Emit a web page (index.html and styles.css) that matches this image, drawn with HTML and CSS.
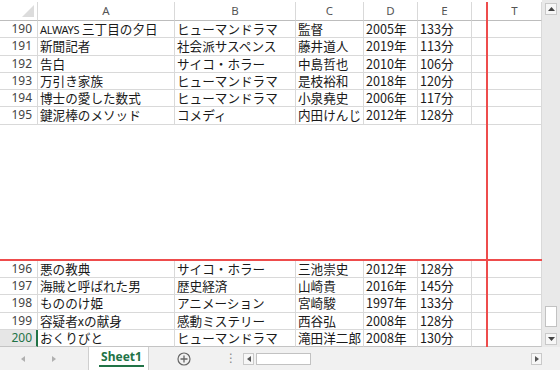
FILE: index.html
```html
<!DOCTYPE html>
<html lang="ja">
<head>
<meta charset="utf-8">
<link rel="stylesheet" href="styles.css">
</head>
<body>
<div class="app">
  <div class="main">
    <div class="sheet">
      <div class="row head">
        <div class="c rh corner"><svg class="tri" width="14" height="14" viewBox="0 0 14 14"><polygon points="13,1 13,13 1,13" fill="#dcdcdc"/></svg></div>
        <div class="c a">A</div>
        <div class="c b">B</div>
        <div class="c cc">C</div>
        <div class="c d">D</div>
        <div class="c e">E</div>
        <div class="c f"></div>
        <div class="vsplit"></div>
        <div class="c t">T</div>
      </div>
      <div class="row"><div class="c rh">190</div><div class="c a"><span class="lat">ALWAYS</span> 三丁目の夕日</div><div class="c b">ヒューマンドラマ</div><div class="c cc">監督</div><div class="c d">2005年</div><div class="c e">133分</div><div class="c f"></div><div class="vsplit"></div><div class="c t"></div></div>
      <div class="row"><div class="c rh">191</div><div class="c a">新聞記者</div><div class="c b">社会派サスペンス</div><div class="c cc">藤井道人</div><div class="c d">2019年</div><div class="c e">113分</div><div class="c f"></div><div class="vsplit"></div><div class="c t"></div></div>
      <div class="row"><div class="c rh">192</div><div class="c a">告白</div><div class="c b">サイコ・ホラー</div><div class="c cc">中島哲也</div><div class="c d">2010年</div><div class="c e">106分</div><div class="c f"></div><div class="vsplit"></div><div class="c t"></div></div>
      <div class="row"><div class="c rh">193</div><div class="c a">万引き家族</div><div class="c b">ヒューマンドラマ</div><div class="c cc">是枝裕和</div><div class="c d">2018年</div><div class="c e">120分</div><div class="c f"></div><div class="vsplit"></div><div class="c t"></div></div>
      <div class="row"><div class="c rh">194</div><div class="c a">博士の愛した数式</div><div class="c b">ヒューマンドラマ</div><div class="c cc">小泉堯史</div><div class="c d">2006年</div><div class="c e">117分</div><div class="c f"></div><div class="vsplit"></div><div class="c t"></div></div>
      <div class="row"><div class="c rh">195</div><div class="c a">鍵泥棒のメソッド</div><div class="c b">コメディ</div><div class="c cc">内田けんじ</div><div class="c d">2012年</div><div class="c e">128分</div><div class="c f"></div><div class="vsplit"></div><div class="c t"></div></div>
      <div class="gap"><div class="gap-l"></div><div class="vsplit"></div><div class="gap-r"></div></div>
      <div class="hsplit"></div>
      <div class="row"><div class="c rh">196</div><div class="c a">悪の教典</div><div class="c b">サイコ・ホラー</div><div class="c cc">三池崇史</div><div class="c d">2012年</div><div class="c e">128分</div><div class="c f"></div><div class="vsplit"></div><div class="c t"></div></div>
      <div class="row"><div class="c rh">197</div><div class="c a">海賊と呼ばれた男</div><div class="c b">歴史経済</div><div class="c cc">山崎貴</div><div class="c d">2016年</div><div class="c e">145分</div><div class="c f"></div><div class="vsplit"></div><div class="c t"></div></div>
      <div class="row"><div class="c rh">198</div><div class="c a">もののけ姫</div><div class="c b">アニメーション</div><div class="c cc">宮崎駿</div><div class="c d">1997年</div><div class="c e">133分</div><div class="c f"></div><div class="vsplit"></div><div class="c t"></div></div>
      <div class="row"><div class="c rh">199</div><div class="c a">容疑者xの献身</div><div class="c b">感動ミステリー</div><div class="c cc">西谷弘</div><div class="c d">2008年</div><div class="c e">128分</div><div class="c f"></div><div class="vsplit"></div><div class="c t"></div></div>
      <div class="row last"><div class="c rh active">200</div><div class="c a">おくりびと</div><div class="c b">ヒューマンドラマ</div><div class="c cc">滝田洋二郎</div><div class="c d">2008年</div><div class="c e">130分</div><div class="c f"></div><div class="vsplit"></div><div class="c t"></div></div>
    </div>
    <div class="vscroll">
      <div class="sbtn"><svg width="7" height="4" viewBox="0 0 7 4"><polygon points="0,4 7,4 3.5,0" fill="#444"/></svg></div>
      <div class="vtrack"><div class="vthumb"></div></div>
      <div class="sbtn"><svg width="7" height="4" viewBox="0 0 7 4"><polygon points="0,0 7,0 3.5,4" fill="#444"/></svg></div>
    </div>
  </div>
  <div class="bar">
    <div class="nav">
      <svg width="4" height="6" viewBox="0 0 4 6"><polygon points="4,0 4,6 0,3" fill="#b0b0b0"/></svg>
      <svg width="4" height="6" viewBox="0 0 4 6"><polygon points="0,0 0,6 4,3" fill="#b0b0b0"/></svg>
    </div>
    <div class="tab"><span class="tabtext">Sheet1</span></div>
    <div class="add"><svg width="14" height="14" viewBox="0 0 14 14"><circle cx="7" cy="7" r="6" fill="none" stroke="#666" stroke-width="1.2"/><path d="M7 3.5V10.5M3.5 7H10.5" stroke="#666" stroke-width="1.3"/></svg></div>
    <div class="dots">⋮</div>
    <div class="hscroll">
      <div class="hbtn"><svg width="4" height="6" viewBox="0 0 4 6"><polygon points="4,0 4,6 0,3" fill="#555"/></svg></div>
      <div class="hthumb"></div>
      <div class="htrack"></div>
      <div class="hbtn"><svg width="4" height="6" viewBox="0 0 4 6"><polygon points="0,0 0,6 4,3" fill="#555"/></svg></div>
    </div>
  </div>
</div>
</body>
</html>
```

FILE: styles.css
```css
html, body {
  margin: 0;
  padding: 0;
  background: #ffffff;
}
body {
  width: 560px;
  height: 370px;
  overflow: hidden;
  font-family: "Noto Sans CJK JP", "Noto Sans", sans-serif;
}
.app {
  display: flex;
  flex-direction: column;
  width: 560px;
  height: 370px;
}
.main {
  display: flex;
  height: 347px;
}
.sheet {
  width: 542px;
  padding-top: 2px;
  box-sizing: border-box;
  display: flex;
  flex-direction: column;
  background: #fff;
}
.row {
  display: flex;
  height: 17.25px;
  flex: none;
}
.row.head {
  height: 19px;
}
.c {
  box-sizing: border-box;
  border-right: 1px solid #d9d9d9;
  border-bottom: 1px solid #d9d9d9;
  white-space: nowrap;
  font-size: 12.6px;
  line-height: 16px;
  color: #1a1a1a;
  padding-left: 2px;
  flex: none;
}
.head .c {
  font-family: "Noto Sans", sans-serif;
  font-size: 11.5px;
  color: #555;
  text-align: center;
  padding-left: 0;
  line-height: 18px;
  border-bottom-color: #bdbdbd;
}
.rh {
  width: 38px;
  text-align: right;
  padding-left: 0;
  padding-right: 5px;
  font-family: "Noto Sans", sans-serif;
  font-size: 12px;
  color: #444;
}
.rh.active {
  color: #217346;
  background: #e6e6e6;
  border-right: 2px solid #217346;
  padding-right: 4px;
}
.corner {
  position: relative;
}
.tri {
  position: absolute;
  right: 2px;
  bottom: 2px;
}
.a { width: 137px; }
.b { width: 121px; }
.cc { width: 68px; }
.d { width: 54px; }
.e { width: 54px; }
.f { width: 14px; border-right: none; }
.t { width: 54px; }
.lat {
  font-family: "Noto Sans", sans-serif;
  font-size: 11px;
  letter-spacing: -0.3px;
}
.vsplit {
  width: 2px;
  background: #ee4c4c;
  flex: none;
}
.gap {
  display: flex;
  flex: 1;
}
.gap-l { width: 486px; }
.gap-r { width: 53px; border-right: 1px solid #d9d9d9; }
.hsplit {
  height: 2px;
  background: #ee4c4c;
  flex: none;
}
.row.last .c {
  border-bottom-color: #c4c4c4;
}
.vscroll {
  width: 18px;
  background: #e9e9e9;
  display: flex;
  flex-direction: column;
  align-items: center;
  padding: 3px 0 2px;
  box-sizing: border-box;
}
.sbtn {
  width: 12px;
  height: 12px;
  box-sizing: border-box;
  border: 1px solid #c9c9c9;
  background: #f7f7f7;
  display: flex;
  align-items: center;
  justify-content: center;
}
.vtrack {
  flex: 1;
  width: 12px;
  display: flex;
  flex-direction: column;
  justify-content: flex-end;
  padding-bottom: 6px;
}
.vthumb {
  height: 21px;
  background: #fff;
  border: 1px solid #c2c2c2;
  box-sizing: border-box;
}
.bar {
  height: 23px;
  background: #f1f1f1;
  display: flex;
  align-items: stretch;
}
.nav {
  width: 88px;
  display: flex;
  align-items: center;
  padding-left: 21px;
  gap: 27px;
  box-sizing: border-box;
}
.tab {
  width: 61px;
  background: #fff;
  border-left: 1px solid #cfcfcf;
  border-right: 1px solid #cfcfcf;
  box-sizing: border-box;
  display: flex;
  justify-content: center;
  align-items: flex-start;
}
.tabtext {
  font-family: "Noto Sans", sans-serif;
  font-weight: bold;
  font-size: 12px;
  color: #217346;
  line-height: 17px;
  padding: 1px 2px 0;
  border-bottom: 2px solid #217346;
  margin-left: 6px;
}
.add {
  width: 72px;
  display: flex;
  align-items: center;
  padding-left: 28px;
  box-sizing: border-box;
}
.dots {
  width: 20px;
  color: #888;
  font-size: 12px;
  line-height: 23px;
  text-align: center;
  font-family: "DejaVu Sans", sans-serif;
}
.hscroll {
  flex: 1;
  display: flex;
  align-items: center;
  padding: 0 18px 0 2px;
  gap: 2px;
}
.hbtn {
  width: 11px;
  height: 12px;
  box-sizing: border-box;
  border: 1px solid #c9c9c9;
  background: #f7f7f7;
  display: flex;
  align-items: center;
  justify-content: center;
}
.hthumb {
  width: 55px;
  height: 12px;
  box-sizing: border-box;
  background: #fff;
  border: 1px solid #c2c2c2;
}
.htrack {
  flex: 1;
}
```
